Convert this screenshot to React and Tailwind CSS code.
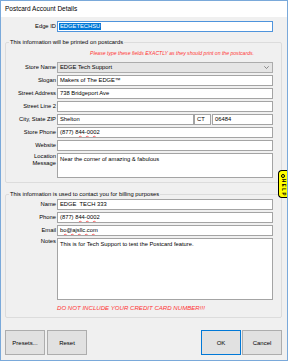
const inputCls = "h-[11px] bg-white border border-[#a4a4a4] flex items-center pl-[2px] text-[5.8px] leading-none whitespace-pre overflow-hidden";

function Row({ label, children, tall }) {
  return (
    <div className={"flex gap-[1px] " + (tall ? "items-start" : "items-center")}>
      <div className="w-[50px] text-right text-[5.8px] leading-[6.5px] shrink-0">{label}</div>
      {children}
    </div>
  );
}

function Field({ children, w = "w-[216px]" }) {
  return <div className={inputCls + " " + w}>{children}</div>;
}

function Squiggle({ children }) {
  return (
    <span className="underline decoration-wavy decoration-[#ff6060] decoration-[0.4px] underline-offset-[0.5px]">{children}</span>
  );
}

function Btn({ children, primary }) {
  return (
    <div
      className={
        "w-[40px] h-[25px] flex items-center justify-center bg-[#e1e1e1] text-[6px] leading-none border " +
        (primary ? "border-[#0078d7]" : "border-[#adadad]")
      }
    >
      {children}
    </div>
  );
}

export default function App() {
  return (
    <div className="w-[288px] h-[361px] relative flex flex-col bg-[#f0f0f0] border border-[#7aa9da] text-black overflow-hidden font-['Liberation_Sans',Arial,sans-serif]">
      <div className="h-[16px] shrink-0 bg-white flex items-center pl-[4px] text-[6.5px] leading-none">
        Postcard Account Details
      </div>

      <div className="flex-1 flex flex-col px-[4px]">
        <div className="mt-[4px] flex items-center gap-[1px]">
          <div className="w-[51px] text-right text-[5.8px] leading-none">Edge ID</div>
          <div className="w-[216px] h-[11px] bg-white border border-[#4f94dc] flex items-center pl-[1px]">
            <span className="bg-[#0078d7] text-white text-[5.8px] leading-[7px] px-[1px]">EDGETECHSU</span>
          </div>
        </div>

        <fieldset className="w-[277px] mt-[6px] border border-[#dcdcdc] rounded-[2px] pb-[4px]">
          <legend className="ml-[3px] px-[1px] text-[5.8px] leading-[8px]">This information will be printed on postcards</legend>
          <div className="mt-[4px] pl-[84px] text-[5.1px] leading-[6px] italic text-[#ff3434] whitespace-nowrap">
            Please type these fields EXACTLY as they should print on the postcards.
          </div>
          <div className="mt-[6px] flex flex-col gap-[2px]">
            <Row label="Store Name">
              <div className="w-[216px] h-[11px] bg-[#e5e5e5] border border-[#acacac] flex items-center justify-between pl-[2px] pr-[3px] text-[5.8px] leading-none">
                <span>EDGE Tech Support</span>
                <svg width="5" height="3" viewBox="0 0 5 3" className="text-[#606060]">
                  <path d="M0.3 0.3 L2.5 2.5 L4.7 0.3" fill="none" stroke="currentColor" strokeWidth="0.7" />
                </svg>
              </div>
            </Row>
            <Row label="Slogan"><Field>Makers of The EDGE™</Field></Row>
            <Row label="Street Address"><Field>738 Bridgeport Ave</Field></Row>
            <Row label="Street Line 2"><Field></Field></Row>
            <Row label="City, State ZIP">
              <div className="flex">
                <Field w="w-[137px]">Shelton</Field>
                <Field w="w-[17px]">CT</Field>
                <div className="w-[1px]" />
                <Field w="w-[61px]">06484</Field>
              </div>
            </Row>
            <Row label="Store Phone"><Field>(877) <Squiggle>844-0002</Squiggle></Field></Row>
            <Row label="Website"><Field></Field></Row>
            <Row label={<>Location<br />Message</>} tall>
              <div className="w-[216px] h-[25px] bg-white border border-[#a4a4a4] pl-[2px] pt-[2px] text-[5.8px] leading-[7px]">
                Near the corner of amazing &amp; fabulous
              </div>
            </Row>
          </div>
        </fieldset>

        <fieldset className="w-[277px] mt-[7px] border border-[#dcdcdc] rounded-[2px] pb-[6px]">
          <legend className="ml-[3px] px-[1px] text-[5.8px] leading-[8px]">This information is used to contact you for billing purposes</legend>
          <div className="mt-[1px] flex flex-col gap-[2px]">
            <Row label="Name"><Field>EDGE  TECH 333</Field></Row>
            <Row label="Phone"><Field>(877) <Squiggle>844-0002</Squiggle></Field></Row>
            <Row label="Email"><Field><Squiggle>bo@ajsllc.com</Squiggle></Field></Row>
            <Row label="Notes" tall>
              <div className="w-[216px] h-[62px] bg-white border border-[#a4a4a4] pl-[2px] pt-[2px] text-[5.8px] leading-[7px]">
                This is for Tech Support to test the Postcard feature.
              </div>
            </Row>
          </div>
          <div className="mt-[4px] pl-[51px] text-[6.1px] leading-[7px] italic text-[#ff3434] whitespace-nowrap">
            DO NOT INCLUDE YOUR CREDIT CARD NUMBER!!!
          </div>
        </fieldset>

        <div className="mt-auto mb-[5px] flex justify-between pr-[1px]">
          <div className="flex gap-[2px]">
            <Btn>Presets...</Btn>
            <Btn>Reset</Btn>
          </div>
          <div className="flex gap-[1px]">
            <Btn primary>OK</Btn>
            <Btn>Cancel</Btn>
          </div>
        </div>
      </div>

      <div className="absolute right-0 top-[169px] w-[9px] h-[28px] bg-[#ffff00] border border-r-0 border-black rounded-l-[4px] flex flex-col items-center pt-[3px] gap-[1px]">
        <div className="w-[4px] h-[4px] rounded-full border border-black" />
        <div className="[writing-mode:vertical-rl] text-[4.5px] leading-none tracking-[1.5px] font-bold">HELP</div>
      </div>
    </div>
  );
}
